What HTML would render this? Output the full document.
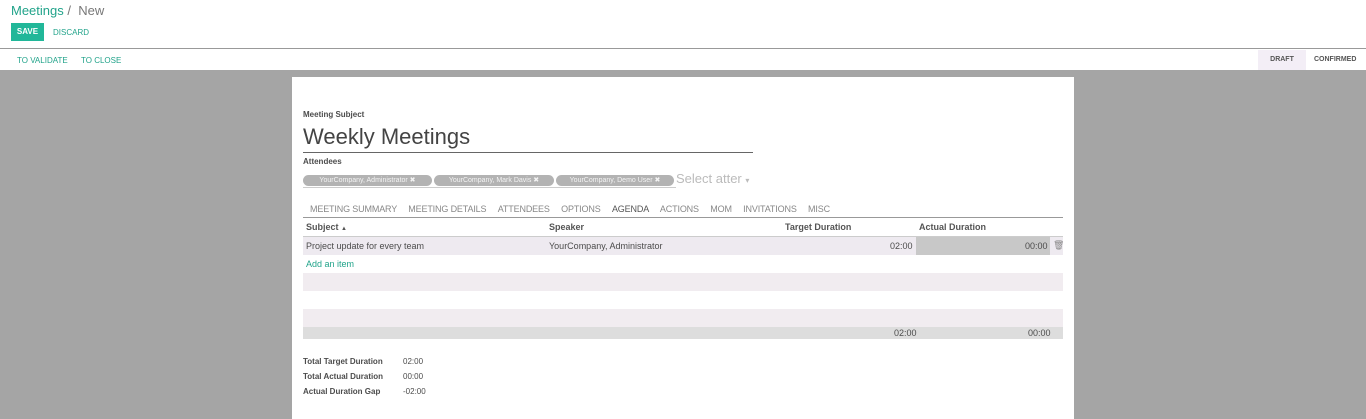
<!DOCTYPE html>
<html><head><meta charset="utf-8"><style>
*{box-sizing:border-box;margin:0;padding:0}
body{width:1366px;height:419px;overflow:hidden;background:#fff;font-family:"Liberation Sans",sans-serif;position:relative;color:#4c4c4c}
.a{position:absolute;white-space:nowrap}
.t{position:absolute;height:11px;border-radius:6px;background:#b3b3b3;color:#f4f4f4;font-size:7px;line-height:11px;text-align:center;white-space:nowrap;overflow:hidden}
</style></head><body>
<div class="a" style="left:11px;top:3px;font-size:13px;color:#7c7bad"><span style="color:#21a38a">Meetings</span> <span style="color:#777">/ &nbsp;New</span></div>
<div class="a" style="left:11px;top:23px;width:33px;height:18px;background:#21b799;color:#fff;font-size:8px;font-weight:bold;line-height:18px;text-align:center">SAVE</div>
<div class="a" style="left:53px;top:28px;font-size:8px;color:#21a38a">DISCARD</div>
<div class="a" style="left:0;top:48px;width:1366px;height:1px;background:#999"></div>
<div class="a" style="left:17px;top:56px;font-size:8px;color:#21a38a">TO VALIDATE</div>
<div class="a" style="left:81px;top:56px;font-size:8px;color:#21a38a">TO CLOSE</div>
<div class="a" style="left:1258px;top:50px;width:48px;height:20px;background:#f3eef6;font-size:7px;font-weight:bold;color:#555;line-height:20px;text-align:center">DRAFT</div>
<div class="a" style="left:1314px;top:56px;font-size:7px;font-weight:bold;color:#555">CONFIRMED</div>
<div class="a" style="left:0;top:70px;width:1366px;height:349px;background:#a5a5a5"></div>
<div class="a" style="left:292px;top:77px;width:782px;height:342px;background:#fff"></div>
<div class="a" style="left:303px;top:110px;font-size:8px;font-weight:bold">Meeting Subject</div>
<div class="a" style="left:303px;top:124px;font-size:22px;color:#444">Weekly Meetings</div>
<div class="a" style="left:303px;top:152px;width:450px;height:1px;background:#666"></div>
<div class="a" style="left:303px;top:157px;font-size:8px;font-weight:bold">Attendees</div>
<div class="t" style="left:303px;top:175px;width:129px">YourCompany, Administrator ✖</div>
<div class="t" style="left:434px;top:175px;width:120px">YourCompany, Mark Davis ✖</div>
<div class="t" style="left:556px;top:175px;width:118px">YourCompany, Demo User ✖</div>
<div class="a" style="left:676px;top:171px;font-size:13px;color:#bbb">Select atter <span style="font-size:8px">▾</span></div>
<div class="a" style="left:303px;top:187px;width:373px;height:1px;background:#ccc"></div>
<div class="a" style="left:310px;top:204px;font-size:9px;color:#888;letter-spacing:-0.15px">MEETING SUMMARY <span style="margin-left:9px">MEETING DETAILS</span> <span style="margin-left:9px">ATTENDEES</span> <span style="margin-left:9px">OPTIONS</span> <span style="margin-left:9px;color:#555">AGENDA</span> <span style="margin-left:9px">ACTIONS</span> <span style="margin-left:9px">MOM</span> <span style="margin-left:9px">INVITATIONS</span> <span style="margin-left:9px">MISC</span></div>
<div class="a" style="left:303px;top:217px;width:760px;height:1px;background:#999"></div>
<div class="a" style="left:306px;top:222px;font-size:9px;font-weight:bold;color:#555">Subject <span style="font-size:6px">▲</span></div>
<div class="a" style="left:549px;top:222px;font-size:9px;font-weight:bold;color:#555">Speaker</div>
<div class="a" style="left:785px;top:222px;font-size:9px;font-weight:bold;color:#555">Target Duration</div>
<div class="a" style="left:919px;top:222px;font-size:9px;font-weight:bold;color:#555">Actual Duration</div>
<div class="a" style="left:303px;top:236px;width:760px;height:19px;background:#eeeaf0;border-top:1px solid #ccc"></div>
<div class="a" style="left:916px;top:237px;width:134px;height:18px;background:#c8c8c8"></div>
<div class="a" style="left:306px;top:241px;font-size:9px">Project update for every team</div>
<div class="a" style="left:549px;top:241px;font-size:9px">YourCompany, Administrator</div>
<div class="a" style="left:890px;top:241px;font-size:9px">02:00</div>
<div class="a" style="left:1025px;top:241px;font-size:9px">00:00</div>
<div class="a" style="left:1053px;top:240px;font-size:9px;color:#888">🗑</div>
<div class="a" style="left:306px;top:259px;font-size:9px;color:#21a38a">Add an item</div>
<div class="a" style="left:303px;top:273px;width:760px;height:18px;background:#f1ecf0"></div>
<div class="a" style="left:303px;top:309px;width:760px;height:18px;background:#f1ecf0"></div>
<div class="a" style="left:303px;top:327px;width:760px;height:12px;background:#ddd"></div>
<div class="a" style="left:894px;top:328px;font-size:9px">02:00</div>
<div class="a" style="left:1028px;top:328px;font-size:9px">00:00</div>
<div class="a" style="left:303px;top:354px;font-size:8px;font-weight:bold;line-height:15px">Total Target Duration<br>Total Actual Duration<br>Actual Duration Gap</div>
<div class="a" style="left:403px;top:354px;font-size:8px;line-height:15px">02:00<br>00:00<br>-02:00</div>
</body></html>
